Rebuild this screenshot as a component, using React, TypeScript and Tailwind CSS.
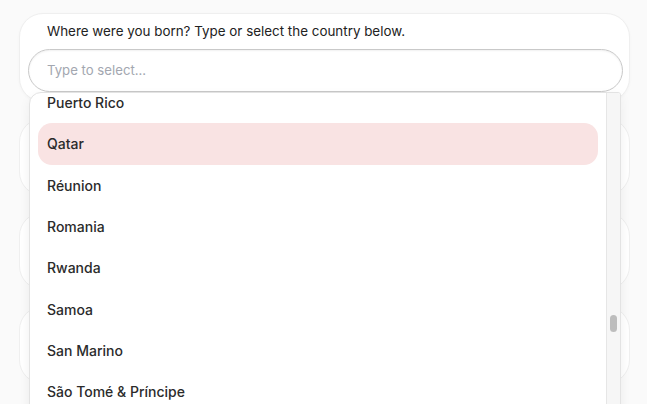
import { useState } from "react"

const countries = [
  "Puerto Rico",
  "Qatar",
  "Réunion",
  "Romania",
  "Rwanda",
  "Samoa",
  "San Marino",
  "São Tomé & Príncipe",
  "Saudi Arabia",
]

function QuestionCard({ question, children }: { question: string; children?: React.ReactNode }) {
  return (
    <div className="relative rounded-[24px] border border-[#efefef] bg-white pt-[7px] pb-[9px] pl-[8px] pr-[6px] shadow-[0_1px_3px_rgba(0,0,0,0.03)]">
      <p className="pl-[19px] text-[13.4px] leading-[20px] text-[#222]">{question}</p>
      <div className="mt-[8px] h-[43px] rounded-full border border-[#c9c9c9] bg-white shadow-[inset_0_1px_2px_rgba(0,0,0,0.06)] flex items-center pl-[18px]">
        <input
          className="w-full bg-transparent text-[13.2px] text-[#333] placeholder:text-[#a3a7b0] outline-none"
          placeholder="Type to select..."
        />
      </div>
      {children}
    </div>
  )
}

export default function App() {
  const [active] = useState("Qatar")

  return (
    <div className="h-[404px] w-[647px] overflow-hidden bg-[#fafafa] font-['Inter',sans-serif]">
      <div className="flex flex-col gap-[16px] pt-[13px] pl-[19px] pr-[17px]">
        <QuestionCard question="Where were you born? Type or select the country below.">
          <div className="absolute left-[9px] top-[78px] z-10 flex h-[340px] w-[592px] overflow-hidden rounded-tl-[12px] rounded-tr-[3px] border border-[#e3e3e3] bg-white shadow-[0_4px_12px_rgba(0,0,0,0.06)]">
            <div className="flex-1 overflow-hidden">
              <ul className="-mt-[11px] flex flex-col px-[8px]">
                {countries.map((c) => (
                  <li
                    key={c}
                    className={
                      "flex h-[41.3px] items-center rounded-[14px] pl-[9px] text-[14px] font-medium text-[#2b2b2b] " +
                      (c === active ? "bg-[#f9e3e3]" : "")
                    }
                  >
                    {c}
                  </li>
                ))}
              </ul>
            </div>
            <div className="w-[14px] border-l border-[#e6e6e6] bg-[#f6f6f6] flex justify-center">
              <div className="mt-[222px] h-[17px] w-[7px] rounded-full bg-[#bdbdbd]" />
            </div>
          </div>
        </QuestionCard>
        <div className="h-[78px] rounded-[24px] border border-[#efefef] bg-white" />
        <div className="h-[78px] rounded-[24px] border border-[#efefef] bg-white" />
        <div className="h-[78px] rounded-[24px] border border-[#efefef] bg-white" />
      </div>
    </div>
  )
}
